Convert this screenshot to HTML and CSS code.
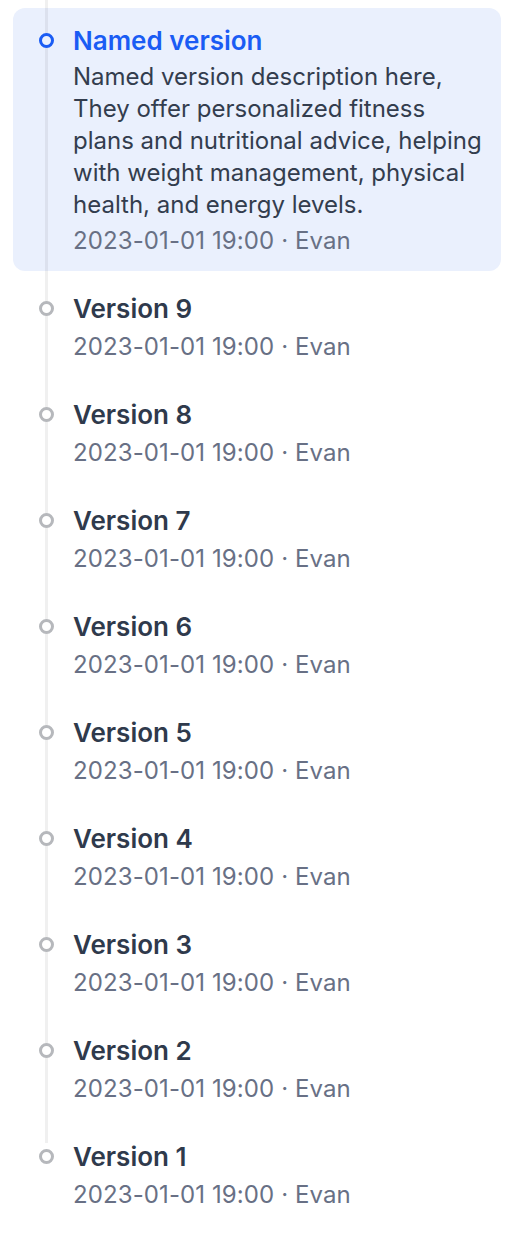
FILE: index.html
```html
<!DOCTYPE html>
<html>
<head>
<meta charset="utf-8">
<link rel="stylesheet" href="styles.css">
</head>
<body>
<div class="timeline">
  <div class="rail"></div>
  <div class="item active">
    <span class="dot"></span>
    <div class="title">Named version</div>
    <div class="desc">Named version description here, They offer personalized fitness plans and nutritional advice, helping with weight management, physical health, and energy levels.</div>
    <div class="meta">2023-01-01 19:00 · Evan</div>
  </div>
  <div class="item"><span class="dot"></span><div class="title">Version 9</div><div class="meta">2023-01-01 19:00 · Evan</div></div>
  <div class="item"><span class="dot"></span><div class="title">Version 8</div><div class="meta">2023-01-01 19:00 · Evan</div></div>
  <div class="item"><span class="dot"></span><div class="title">Version 7</div><div class="meta">2023-01-01 19:00 · Evan</div></div>
  <div class="item"><span class="dot"></span><div class="title">Version 6</div><div class="meta">2023-01-01 19:00 · Evan</div></div>
  <div class="item"><span class="dot"></span><div class="title">Version 5</div><div class="meta">2023-01-01 19:00 · Evan</div></div>
  <div class="item"><span class="dot"></span><div class="title">Version 4</div><div class="meta">2023-01-01 19:00 · Evan</div></div>
  <div class="item"><span class="dot"></span><div class="title">Version 3</div><div class="meta">2023-01-01 19:00 · Evan</div></div>
  <div class="item"><span class="dot"></span><div class="title">Version 2</div><div class="meta">2023-01-01 19:00 · Evan</div></div>
  <div class="item"><span class="dot"></span><div class="title">Version 1</div><div class="meta">2023-01-01 19:00 · Evan</div></div>
</div>
</body>
</html>
```
FILE: styles.css
```css
html, body {
  margin: 0;
  padding: 0;
  background: #ffffff;
}
body {
  font-family: Inter, "Noto Sans", sans-serif;
  -webkit-font-smoothing: antialiased;
}
.timeline {
  position: relative;
  display: flex;
  flex-direction: column;
  gap: 5px;
  padding: 8px 12px 15px 13px;
}
.rail {
  position: absolute;
  left: 45px;
  top: 0;
  width: 3px;
  height: 1143px;
  background: rgba(0, 0, 0, 0.06);
  z-index: 1;
}
.item {
  position: relative;
  padding: 15px 14px 12px 60px;
  border-radius: 12px;
}
.item.active {
  background: #eaf0fd;
}
.dot {
  position: absolute;
  left: 26px;
  top: 25px;
  width: 15px;
  height: 15px;
  box-sizing: border-box;
  border-radius: 50%;
  border: 3.5px solid #b6b8bc;
  background: #ffffff;
  z-index: 2;
}
.active .dot {
  border-color: #1a5cf4;
  background: #eaf0fd;
}
.title {
  font-size: 26px;
  line-height: 36px;
  font-weight: 600;
  color: #2f3a4c;
}
.active .title {
  color: #1a5cf4;
}
.desc {
  margin-top: 2px;
  font-size: 24px;
  line-height: 32px;
  color: #333d4e;
}
.meta {
  margin-top: 2px;
  font-size: 24px;
  line-height: 36px;
  color: #687085;
  letter-spacing: 0.1px;
}
```
